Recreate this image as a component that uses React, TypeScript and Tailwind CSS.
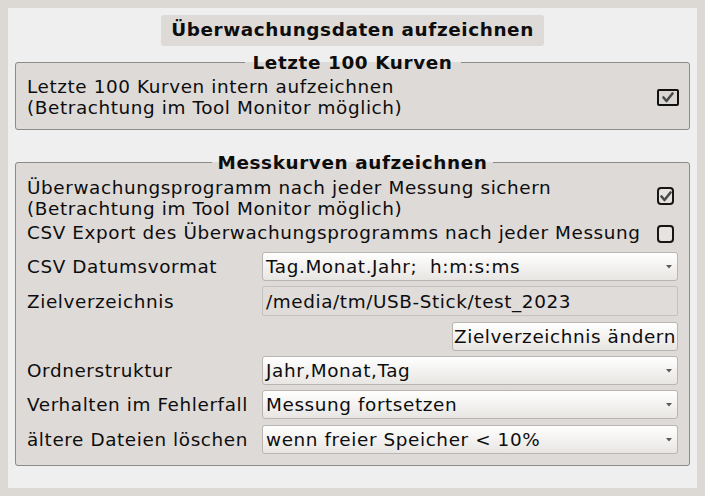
import React from 'react';

function CheckMark() {
    return (
        <svg width="12" height="11" viewBox="0 0 12 11">
            <path d="M1.5 5.5 L4.5 9 L10.5 1.5" fill="none" stroke="#4a4a4a" strokeWidth="2.6" strokeLinecap="round" strokeLinejoin="round" />
        </svg>
    );
}

function CheckBox({ checked }: { checked: boolean }) {
    return (
        <div className="flex h-[18px] w-[17px] shrink-0 items-center justify-center rounded-[4px] border-2 border-[#161616] bg-[#e6e3e0]">
            {checked && <CheckMark />}
        </div>
    );
}

function Combo({ value }: { value: string }) {
    return (
        <div className="flex h-[29px] flex-1 items-center justify-between rounded-[3px] border border-[#b8b5b2] bg-linear-to-b from-[#ffffff] to-[#e8e6e3] pl-[3px] pr-[5px]">
            <span className="whitespace-pre">{value}</span>
            <svg width="6" height="4" viewBox="0 0 6 4">
                <polygon points="0,0 6,0 3,3.5" fill="#5a5a5a" />
            </svg>
        </div>
    );
}

function Row({ label, children, className }: { label: string; children: React.ReactNode; className: string }) {
    return (
        <div className={`flex items-center ${className}`}>
            <div className="w-[235px] shrink-0">{label}</div>
            {children}
        </div>
    );
}

export default function App() {
    return (
        <div className="h-[496px] w-[705px] bg-[#dcd8d4] p-2 font-['DejaVu_Sans',sans-serif] text-[18.4px] leading-[21px] tracking-[0.6px] text-[#0d0d0d]">
            <div className="flex h-[480px] w-[689px] flex-col bg-[#efefef] px-[7px] pt-[7px]">
                <div className="self-center rounded-[3px] bg-[#dedad7] px-[10px] pt-[4px] pb-[6px] font-bold">
                    Überwachungsdaten aufzeichnen
                </div>

                {/* Letzte 100 Kurven */}
                <fieldset className="mt-[6px] rounded-[3px] border border-[#8d8b89] bg-[#dedad7]">
                    <legend className="mx-auto px-[8px] font-bold">Letzte 100 Kurven</legend>
                    <div className="flex items-center justify-between pt-[3px] pb-[11px] pl-[11px] pr-[10px]">
                        <div>
                            <div>Letzte 100 Kurven intern aufzeichnen</div>
                            <div>(Betrachtung im Tool Monitor möglich)</div>
                        </div>
                        <div className="flex h-[17px] w-[22px] items-center justify-center rounded-[2px] border-2 border-[#111] bg-[#d9d6d3]">
                            <CheckMark />
                        </div>
                    </div>
                </fieldset>

                {/* Messkurven aufzeichnen */}
                <fieldset className="mt-[22px] rounded-[3px] border border-[#8d8b89] bg-[#dedad7]">
                    <legend className="mx-auto px-[6px] font-bold">Messkurven aufzeichnen</legend>
                    <div className="flex flex-col px-[11px] pb-[11px]">
                        <div className="mt-[4px] flex items-center justify-between">
                            <div>
                                <div>Überwachungsprogramm nach jeder Messung sichern</div>
                                <div>(Betrachtung im Tool Monitor möglich)</div>
                            </div>
                            <div className="mr-[4px] -mt-[4px]">
                                <CheckBox checked />
                            </div>
                        </div>
                        <div className="mt-[3px] flex items-center justify-between">
                            <div>CSV Export des Überwachungsprogramms nach jeder Messung</div>
                            <div className="mr-[4px] mt-[3px]">
                                <CheckBox checked={false} />
                            </div>
                        </div>
                        <Row label="CSV Datumsvormat" className="mt-[9px]">
                            <Combo value="Tag.Monat.Jahr;  h:m:s:ms" />
                        </Row>
                        <Row label="Zielverzeichnis" className="mt-[5px]">
                            <div className="flex h-[30px] flex-1 items-center rounded-[2px] border border-[#c4c1be] bg-[#dfdcd9] pl-[3px]">
                                /media/tm/USB-Stick/test_2023
                            </div>
                        </Row>
                        <div className="mt-[6px] flex justify-end">
                            <button className="h-[29px] w-[226px] rounded-[3px] border border-[#b8b5b2] bg-linear-to-b from-[#ffffff] to-[#e8e6e3] text-center">
                                Zielverzeichnis ändern
                            </button>
                        </div>
                        <Row label="Ordnerstruktur" className="mt-[5px]">
                            <Combo value="Jahr,Monat,Tag" />
                        </Row>
                        <Row label="Verhalten im Fehlerfall" className="mt-[5px]">
                            <Combo value="Messung fortsetzen" />
                        </Row>
                        <Row label="ältere Dateien löschen" className="mt-[6px]">
                            <Combo value="wenn freier Speicher < 10%" />
                        </Row>
                    </div>
                </fieldset>
            </div>
        </div>
    );
}
